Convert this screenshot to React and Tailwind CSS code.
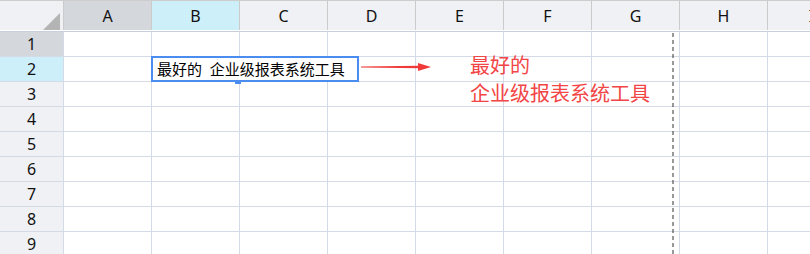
import React from "react";

const COLS = ["A", "B", "C", "D", "E", "F", "G", "H", "I"];
const ROWS = [1, 2, 3, 4, 5, 6, 7, 8, 9];

const FONT = { fontFamily: '"Noto Sans", "Noto Sans CJK SC", sans-serif' };

function colHeaderBg(c) {
  if (c === "A") return "bg-[#d4d7dc]";
  if (c === "B") return "bg-[#cdeffa]";
  return "bg-[#f0f1f5]";
}

function rowHeaderBg(r) {
  if (r === 1) return "bg-[#d4d7dc]";
  if (r === 2) return "bg-[#cdeffa]";
  return "bg-[#f0f1f5]";
}

export default function App() {
  return (
    <div
      className="relative w-[810px] h-[254px] overflow-hidden bg-white text-[#111111]"
      style={FONT}
    >
      {/* column header */}
      <div className="flex h-[32px] border-t border-b border-t-[#cdcdcd] border-b-[#c7cfdc] shadow-[inset_0_-1px_0_#ffffff] bg-[#f0f1f5]">
        <div className="relative w-[64px] shrink-0 border-r border-[#cbcbcb] bg-[#f0f1f5] mb-[1px]">
          <svg className="absolute left-[43px] top-[12px]" width="18" height="17" viewBox="0 0 18 17">
            <polygon points="17,0 17,17 0,17" fill="#b4b4b4" />
          </svg>
        </div>
        {COLS.map((c) => (
          <div
            key={c}
            className={`w-[88px] shrink-0 border-r border-[#cbcbcb] mb-[1px] flex items-center justify-center text-[16px] ${colHeaderBg(c)}`}
          >
            {c}
          </div>
        ))}
      </div>

      {/* body */}
      {ROWS.map((r) => (
        <div key={r} className="flex h-[25px] border-b border-[#d5dbe6]">
          <div
            className={`w-[64px] shrink-0 border-r border-[#d5dbe6] flex items-center justify-center text-[16px] ${rowHeaderBg(r)}`}
          >
            {r}
          </div>
          {COLS.map((c) => (
            <div key={c} className="w-[88px] shrink-0 border-r border-[#d5dbe6]" />
          ))}
        </div>
      ))}

      {/* page break dashed line */}
      <svg className="absolute left-[672px] top-[33px]" width="2" height="221">
        <line x1="1" y1="0" x2="1" y2="221" stroke="#333" strokeWidth="1" strokeDasharray="4 3" />
      </svg>

      {/* cell editor */}
      <div className="absolute left-[151px] top-[56px] w-[208px] h-[26px] border-2 border-[#4a8cf0] bg-white flex items-center pl-[4px]">
        <span className="text-[15px] leading-none whitespace-pre text-black">最好的  企业级报表系统工具</span>
      </div>
      <div className="absolute left-[235px] top-[81px] w-[6px] h-[3px] bg-[#4a8cf0]" />

      {/* arrow */}
      <svg className="absolute left-[360px] top-[61px]" width="72" height="12" viewBox="0 0 72 12">
        <polygon points="1,5.6 60,4.8 60,7.2 1,6.4" fill="#f03a3a" />
        <polygon points="58,2 71,6 58,10" fill="#f03a3a" />
      </svg>

      {/* red text */}
      <div className="absolute left-[470px] top-[52px] text-[20px] leading-[28px] text-[#f24545]">
        <div>最好的</div>
        <div>企业级报表系统工具</div>
      </div>
    </div>
  );
}
